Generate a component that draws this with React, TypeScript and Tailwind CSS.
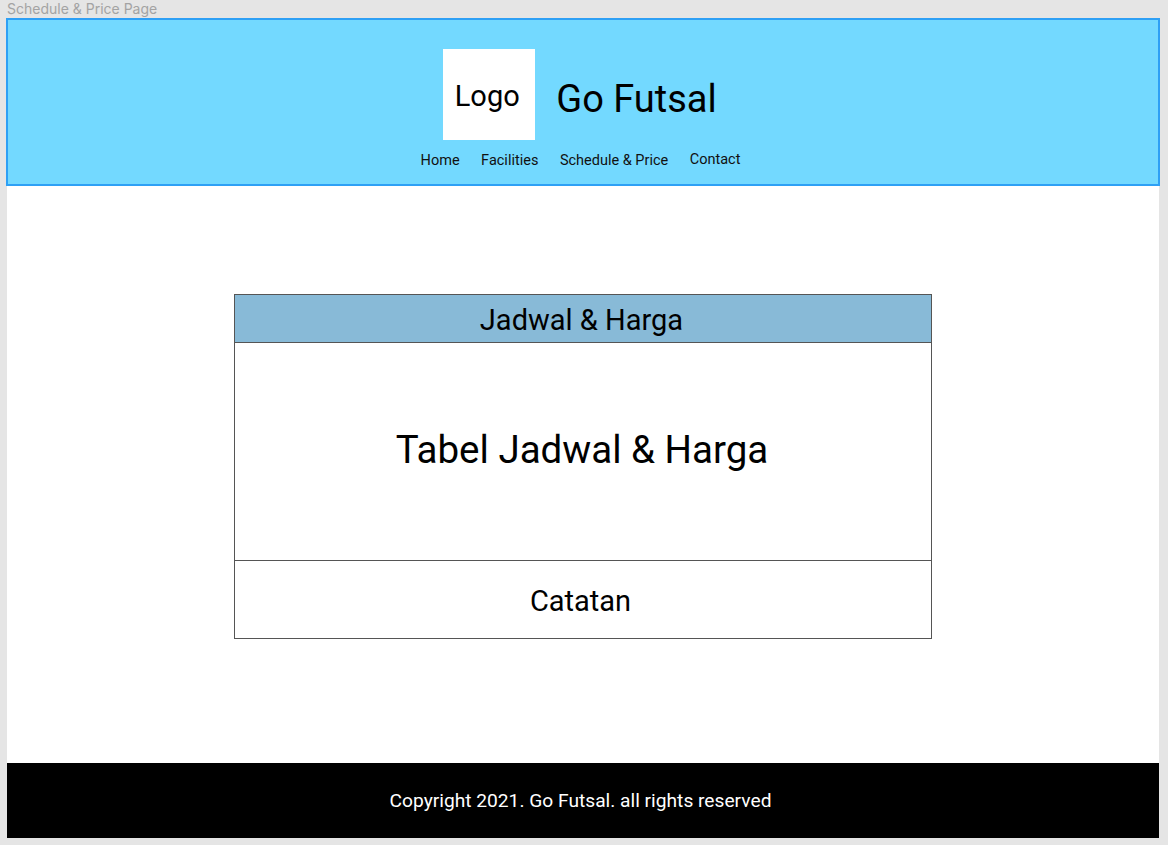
export default function App() {
  const font = { fontFamily: "Roboto, 'Liberation Sans', sans-serif" };
  return (
    <div className="w-[1168px] h-[845px] bg-[#e5e5e5] overflow-hidden" style={font}>
      <div className="h-[18px] pl-[7px] text-[14px] leading-[18px] text-[#a3a3a3] font-['Inter',sans-serif]">
        Schedule &amp; Price Page
      </div>
      <div className="pl-[6px]">
        <header className="w-[1154px] h-[168px] border-2 border-[#2ea0f5] bg-[#73d9ff] flex flex-col items-center">
          <div className="flex items-center mt-[29px] ml-[-6px]">
            <div className="w-[92px] h-[91px] bg-white flex items-center justify-center text-[29px] text-black pt-[4px] pr-[4px]">
              Logo
            </div>
            <div className="ml-[21px] text-[38px] leading-none text-black pt-[8px]">Go Futsal</div>
          </div>
          <nav className="flex gap-[21.5px] mt-[11px] ml-[-5px] text-[14.5px] leading-[20px] text-[#111]">
            <span>Home</span>
            <span>Facilities</span>
            <span>Schedule &amp; Price</span>
            <span className="-mt-[1px]">Contact</span>
          </nav>
        </header>
        <main className="w-[1152px] ml-[1px] h-[577px] bg-white pt-[108px]">
          <div className="w-[698px] ml-[227px] border border-[#555]">
            <div className="h-[48px] bg-[#88bad7] border-b border-[#555] flex items-center justify-center text-[29px] text-black pt-[4px] pr-[3px]">
              Jadwal &amp; Harga
            </div>
            <div className="h-[218px] border-b border-[#555] flex items-center justify-center text-[38.5px] text-black pr-[2px] pb-[4px]">
              Tabel Jadwal &amp; Harga
            </div>
            <div className="h-[77px] flex items-center justify-center text-[29px] text-black pt-[4px] pr-[5px]">
              Catatan
            </div>
          </div>
        </main>
        <footer className="w-[1152px] ml-[1px] h-[75px] bg-black flex items-center justify-center text-[19.2px] text-white pr-[5px] pt-[2px]">
          Copyright 2021. Go Futsal. all rights reserved
        </footer>
      </div>
    </div>
  );
}
